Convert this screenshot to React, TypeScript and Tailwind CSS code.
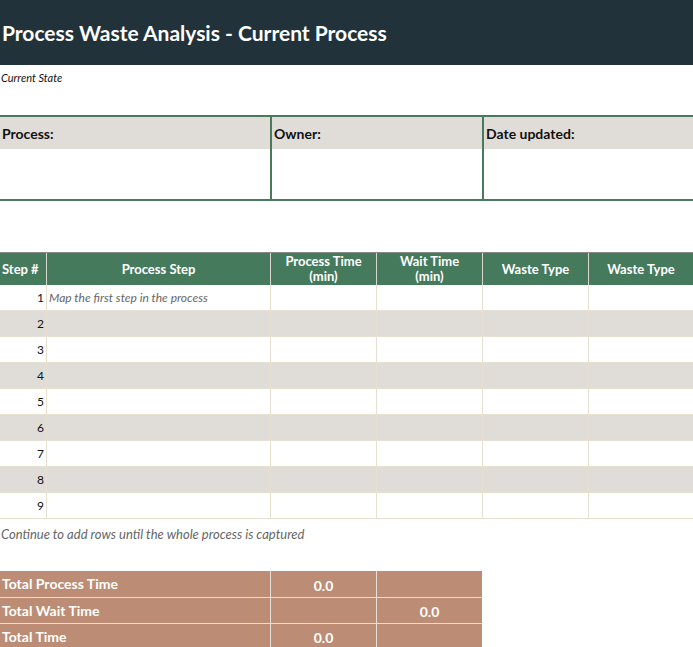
export default function App() {
  const font = { fontFamily: "Lato, 'Open Sans', sans-serif" };
  const rows = [1, 2, 3, 4, 5, 6, 7, 8, 9];
  const cols = "grid grid-cols-[46px_224px_106px_106px_106px_105px]";
  return (
    <div className="w-[693px] h-[647px] bg-white overflow-hidden text-[#111]" style={font}>
      <div className="h-[65px] bg-[#21323a] flex items-center px-[2px] pt-[1px]">
        <span className="text-white font-bold text-[21px]">Process Waste Analysis - Current Process</span>
      </div>
      <div className="h-[50px] pt-[5px] pl-[1px] text-[11px] italic">Current State</div>
      <div className="border-y-2 border-[#4a7a5e] grid grid-cols-[270px_212px_211px] h-[86px]">
        {["Process:", "Owner:", "Date updated:"].map((t, i) => (
          <div key={t} className={`flex flex-col ${i > 0 ? "border-l-2 border-[#4a7a5e]" : ""}`}>
            <div className="h-[32px] bg-[#e0ddd8] font-bold text-[14px] flex items-center pl-[2px]">{t}</div>
            <div className="flex-1" />
          </div>
        ))}
      </div>
      <div className="h-[51px]" />
      <div className={`${cols} h-[33px] bg-[#467a5d] text-white font-bold text-[13px] leading-[15px] border-t border-[#888]`}>
        <div className="flex items-center pl-[2px]">Step #</div>
        {["Process Step", "Process Time (min)", "Wait Time (min)", "Waste Type", "Waste Type"].map((t, i) => (
          <div key={i} className="border-l border-[#d8d8d0] flex items-center justify-center text-center px-2">{t}</div>
        ))}
      </div>
      {rows.map((r) => (
        <div key={r} className={`${cols} h-[26px] border-b border-[#e6e0d0] ${r % 2 === 0 ? "bg-[#e0ddd8]" : "bg-white"}`}>
          <div className="flex items-center justify-end pr-[2px] text-[12px]">{r}</div>
          <div className="border-l border-[#e6e0d0] flex items-center pl-[2px] text-[12px] italic text-[#666]">
            {r === 1 ? "Map the first step in the process" : ""}
          </div>
          <div className="border-l border-[#e6e0d0]" />
          <div className="border-l border-[#e6e0d0]" />
          <div className="border-l border-[#e6e0d0]" />
          <div className="border-l border-[#e6e0d0]" />
        </div>
      ))}
      <div className="h-[52px] pt-[6px] pl-[1px] text-[13px] italic text-[#666]">Continue to add rows until the whole process is captured</div>
      <div className="w-[482px] bg-[#bc8d74] text-white font-bold text-[14px]">
        {[
          ["Total Process Time", "0.0", ""],
          ["Total Wait Time", "", "0.0"],
          ["Total Time", "0.0", ""],
        ].map((r, i) => (
          <div key={i} className={`grid grid-cols-[270px_106px_106px] h-[26px] ${i > 0 ? "border-t border-[#e8e0d8]" : ""}`}>
            <div className="flex items-start pl-[2px] pt-[2px]">{r[0]}</div>
            <div className="border-l border-[#e8e0d8] flex items-end justify-center pb-[1px]">{r[1]}</div>
            <div className="border-l border-[#e8e0d8] flex items-end justify-center pb-[1px]">{r[2]}</div>
          </div>
        ))}
      </div>
    </div>
  );
}
